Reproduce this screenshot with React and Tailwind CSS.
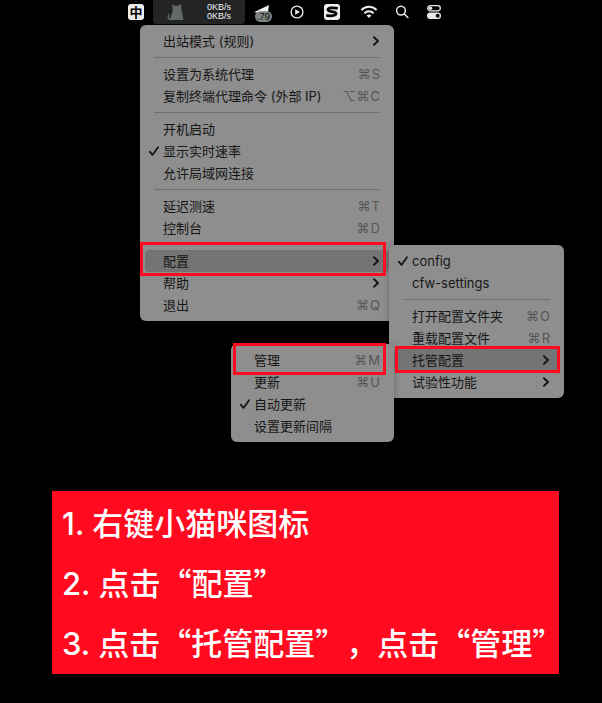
const sans = "font-['Inter','Noto_Sans_CJK_SC',sans-serif]";

function Check() {
  return (
    <svg viewBox="0 0 10 10" className="h-[10px] w-[10px]" fill="none" stroke="currentColor" strokeWidth="1.8" strokeLinecap="round" strokeLinejoin="round" aria-hidden="true">
      <path d="M.9 5.8 L3.5 8.9 L9 1.2" />
    </svg>
  );
}

function Chevron() {
  return (
    <svg viewBox="0 0 8 10" className="h-[10px] w-[8px]" fill="none" stroke="currentColor" strokeWidth="1.9" strokeLinecap="round" strokeLinejoin="round" aria-hidden="true">
      <path d="M2 1.2 L6 5 L2 8.8" />
    </svg>
  );
}

function Item({ label, keys, checked, submenu, active }) {
  return (
    <button
      type="button"
      role="menuitem"
      className={`flex h-[22px] w-full items-center rounded pr-[9px] pl-1 text-left text-[13px] leading-[22px] whitespace-nowrap text-[#161616] ${active ? "bg-[#747474]" : ""}`}
    >
      <span className="flex w-[14px] shrink-0 items-center">{checked && <Check />}</span>
      <span className="flex-1">{label}</span>
      {keys && (
        <span className="flex gap-px text-[#565656]">
          {keys.map((k) => (
            <span key={k}>{k}</span>
          ))}
        </span>
      )}
      {submenu && <Chevron />}
    </button>
  );
}

function Separator() {
  return (
    <div className="px-[9px] py-[5px]" role="separator">
      <div className="h-px bg-[#707070]" />
    </div>
  );
}

function Menu({ className, children }) {
  return (
    <div role="menu" className={`rounded-md bg-[#8e8e8e] p-[5px] ${className}`}>
      {children}
    </div>
  );
}

function CatIcon() {
  return (
    <svg viewBox="0 0 18 18" className="h-[18px] w-[18px]" fill="#656868" aria-hidden="true">
      <path d="M5.4 .8 L7.6 2.8 H11.8 L14.2 .8 L14.4 5.4 C14.4 7 15 9 15.4 11.4 L16.4 17 H3.4 C1.2 17 .2 15.4 .6 13.6 L1.6 10.4 L2.6 10.8 L2 13.8 C1.9 14.8 2.4 15.4 3.4 15.2 C3.8 12.4 5.8 9.6 5.6 6.4 Z" />
    </svg>
  );
}

function PlaneIcon() {
  return (
    <svg viewBox="0 0 20 20" className="h-5 w-5" aria-hidden="true">
      <rect x="2" y="9" width="17" height="11" rx="5.5" fill="#7d8284" />
      <path d="M1 10.2 L16 3 L15 9.4 L11 9 L6 9.6 L4 10.6 Z" fill="#f2f2f2" />
      <text x="10.5" y="17.6" textAnchor="middle" fontSize="9" className="font-['Inter',sans-serif]" fill="#111">.79</text>
    </svg>
  );
}

function PlayIcon() {
  return (
    <svg viewBox="0 0 14 14" className="h-[14px] w-[14px]" fill="none" aria-hidden="true">
      <circle cx="7" cy="7" r="5.9" stroke="#e8e8e8" strokeWidth="1.4" />
      <path d="M5.2 4.2 L10 7 L5.2 9.8 Z" fill="#e8e8e8" />
    </svg>
  );
}

function SogouIcon() {
  return (
    <svg viewBox="0 0 16 16" className="h-4 w-4" fill="none" aria-hidden="true">
      <rect width="16" height="16" rx="3" fill="#eeeeee" />
      <path d="M13.8 4.4 C10 3.4 4 3.6 3.9 5.8 C3.8 8 12.2 7.2 12.2 9.6 C12.2 12 6 12.2 2.2 11.4" stroke="#050505" strokeWidth="2.7" />
    </svg>
  );
}

function WifiIcon() {
  return (
    <svg viewBox="0 0 18 14" className="h-[14px] w-[18px]" fill="none" stroke="#eeeeee" strokeWidth="2" aria-hidden="true">
      <path d="M1.4 5.2 C5.6 .6 12.4 .6 16.6 5.2" />
      <path d="M4.4 8.4 C7 5.6 11 5.6 13.6 8.4" />
      <path d="M6.6 10.4 C8 9.2 10 9.2 11.4 10.4 L9 13 Z" fill="#eeeeee" stroke="none" />
    </svg>
  );
}

function SearchIcon() {
  return (
    <svg viewBox="0 0 14 14" className="h-[14px] w-[14px]" fill="none" stroke="#e8e8e8" strokeWidth="1.5" strokeLinecap="round" aria-hidden="true">
      <circle cx="6" cy="5.6" r="4.4" />
      <path d="M9.4 9 L12.8 12.6" />
    </svg>
  );
}

function ControlIcon() {
  return (
    <svg viewBox="0 0 14 14" className="h-[14px] w-[14px]" fill="none" aria-hidden="true">
      <rect x=".7" y=".7" width="12.6" height="5.2" rx="2.6" stroke="#e8e8e8" strokeWidth="1.3" />
      <circle cx="3.4" cy="3.3" r="1.8" fill="#e8e8e8" />
      <rect x="0" y="7.6" width="14" height="6.4" rx="3.2" fill="#e8e8e8" />
      <circle cx="10.7" cy="10.8" r="2" fill="#111" />
    </svg>
  );
}

function MenuBar() {
  return (
    <header className="flex h-6 items-center pl-32">
      <span className="flex h-4 w-4 items-center justify-center rounded-[3px] bg-[#ececec] text-[13px] leading-4 font-bold text-black">中</span>
      <div className="ml-[9px] flex h-6 w-[92px] items-center justify-between rounded-b bg-[#232525] pr-[14px] pl-[14px]">
        <CatIcon />
        <div className="text-right font-['Liberation_Sans',sans-serif] text-[9px] leading-[9px] text-[#f2f2f2]">
          <div>0KB/s</div>
          <div>0KB/s</div>
        </div>
      </div>
      <div className="ml-2 flex items-center">
        <PlaneIcon />
      </div>
      <div className="ml-[17px] flex items-center">
        <PlayIcon />
      </div>
      <div className="ml-5 flex items-center">
        <SogouIcon />
      </div>
      <div className="ml-5 flex items-center">
        <WifiIcon />
      </div>
      <div className="ml-[17px] flex items-center">
        <SearchIcon />
      </div>
      <div className="ml-[18px] flex items-center">
        <ControlIcon />
      </div>
    </header>
  );
}

function Step({ number, children }) {
  return (
    <li className="flex h-15 items-baseline gap-2">
      <span className="font-['Inter',sans-serif]">{number}.</span>
      <span className="font-['Noto_Sans_CJK_SC',sans-serif] [text-spacing-trim:space-all]">{children}</span>
    </li>
  );
}

export default function App() {
  return (
    <div lang="zh-CN" className={`min-h-screen bg-black pb-[28px] ${sans}`}>
      <MenuBar />
      <div className="relative mt-px ml-[140px] w-[254px]">
        <Menu className="">
          <Item label="出站模式 (规则)" submenu />
          <Separator />
          <Item label="设置为系统代理" keys={["⌘", "S"]} />
          <Item label="复制终端代理命令 (外部 IP)" keys={["⌥", "⌘", "C"]} />
          <Separator />
          <Item label="开机启动" />
          <Item label="显示实时速率" checked />
          <Item label="允许局域网连接" />
          <Separator />
          <Item label="延迟测速" keys={["⌘", "T"]} />
          <Item label="控制台" keys={["⌘", "D"]} />
          <Separator />
          <Item label="配置" submenu active />
          <Item label="帮助" submenu />
          <Item label="退出" keys={["⌘", "Q"]} />
        </Menu>
        <Menu className="absolute top-[220px] left-[249px] w-[175px] shadow-[0_0_6px_rgba(0,0,0,0.25)]">
          <Item label="config" checked />
          <Item label="cfw-settings" />
          <Separator />
          <Item label="打开配置文件夹" keys={["⌘", "O"]} />
          <Item label="重载配置文件" keys={["⌘", "R"]} />
          <Item label="托管配置" submenu active />
          <Item label="试验性功能" submenu />
        </Menu>
        <Menu className="absolute top-[319px] left-[91px] w-[163px] shadow-[0_0_6px_rgba(0,0,0,0.25)]">
          <Item label="管理" keys={["⌘", "M"]} />
          <Item label="更新" keys={["⌘", "U"]} />
          <Item label="自动更新" checked />
          <Item label="设置更新间隔" />
        </Menu>
        <div className="pointer-events-none absolute top-[217px] left-0 h-[34px] w-[246px] border-3 border-[#ff0a1e]" />
        <div className="pointer-events-none absolute top-[321px] left-[255px] h-[27px] w-[165px] border-3 border-[#ff0a1e]" />
        <div className="pointer-events-none absolute top-[318px] left-[93px] h-8 w-[153px] border-3 border-[#ff0a1e]" />
      </div>
      <ol className="mt-[170px] mr-[43px] ml-[52px] flex flex-col bg-[#ff0a1e] pt-px pb-[2px] pl-[10px] text-[31px] leading-[60px] font-medium whitespace-nowrap text-white">
        <Step number="1">右键小猫咪图标</Step>
        <Step number="2">点击“配置”</Step>
        <Step number="3">点击“托管配置”，点击“管理”</Step>
      </ol>
    </div>
  );
}
